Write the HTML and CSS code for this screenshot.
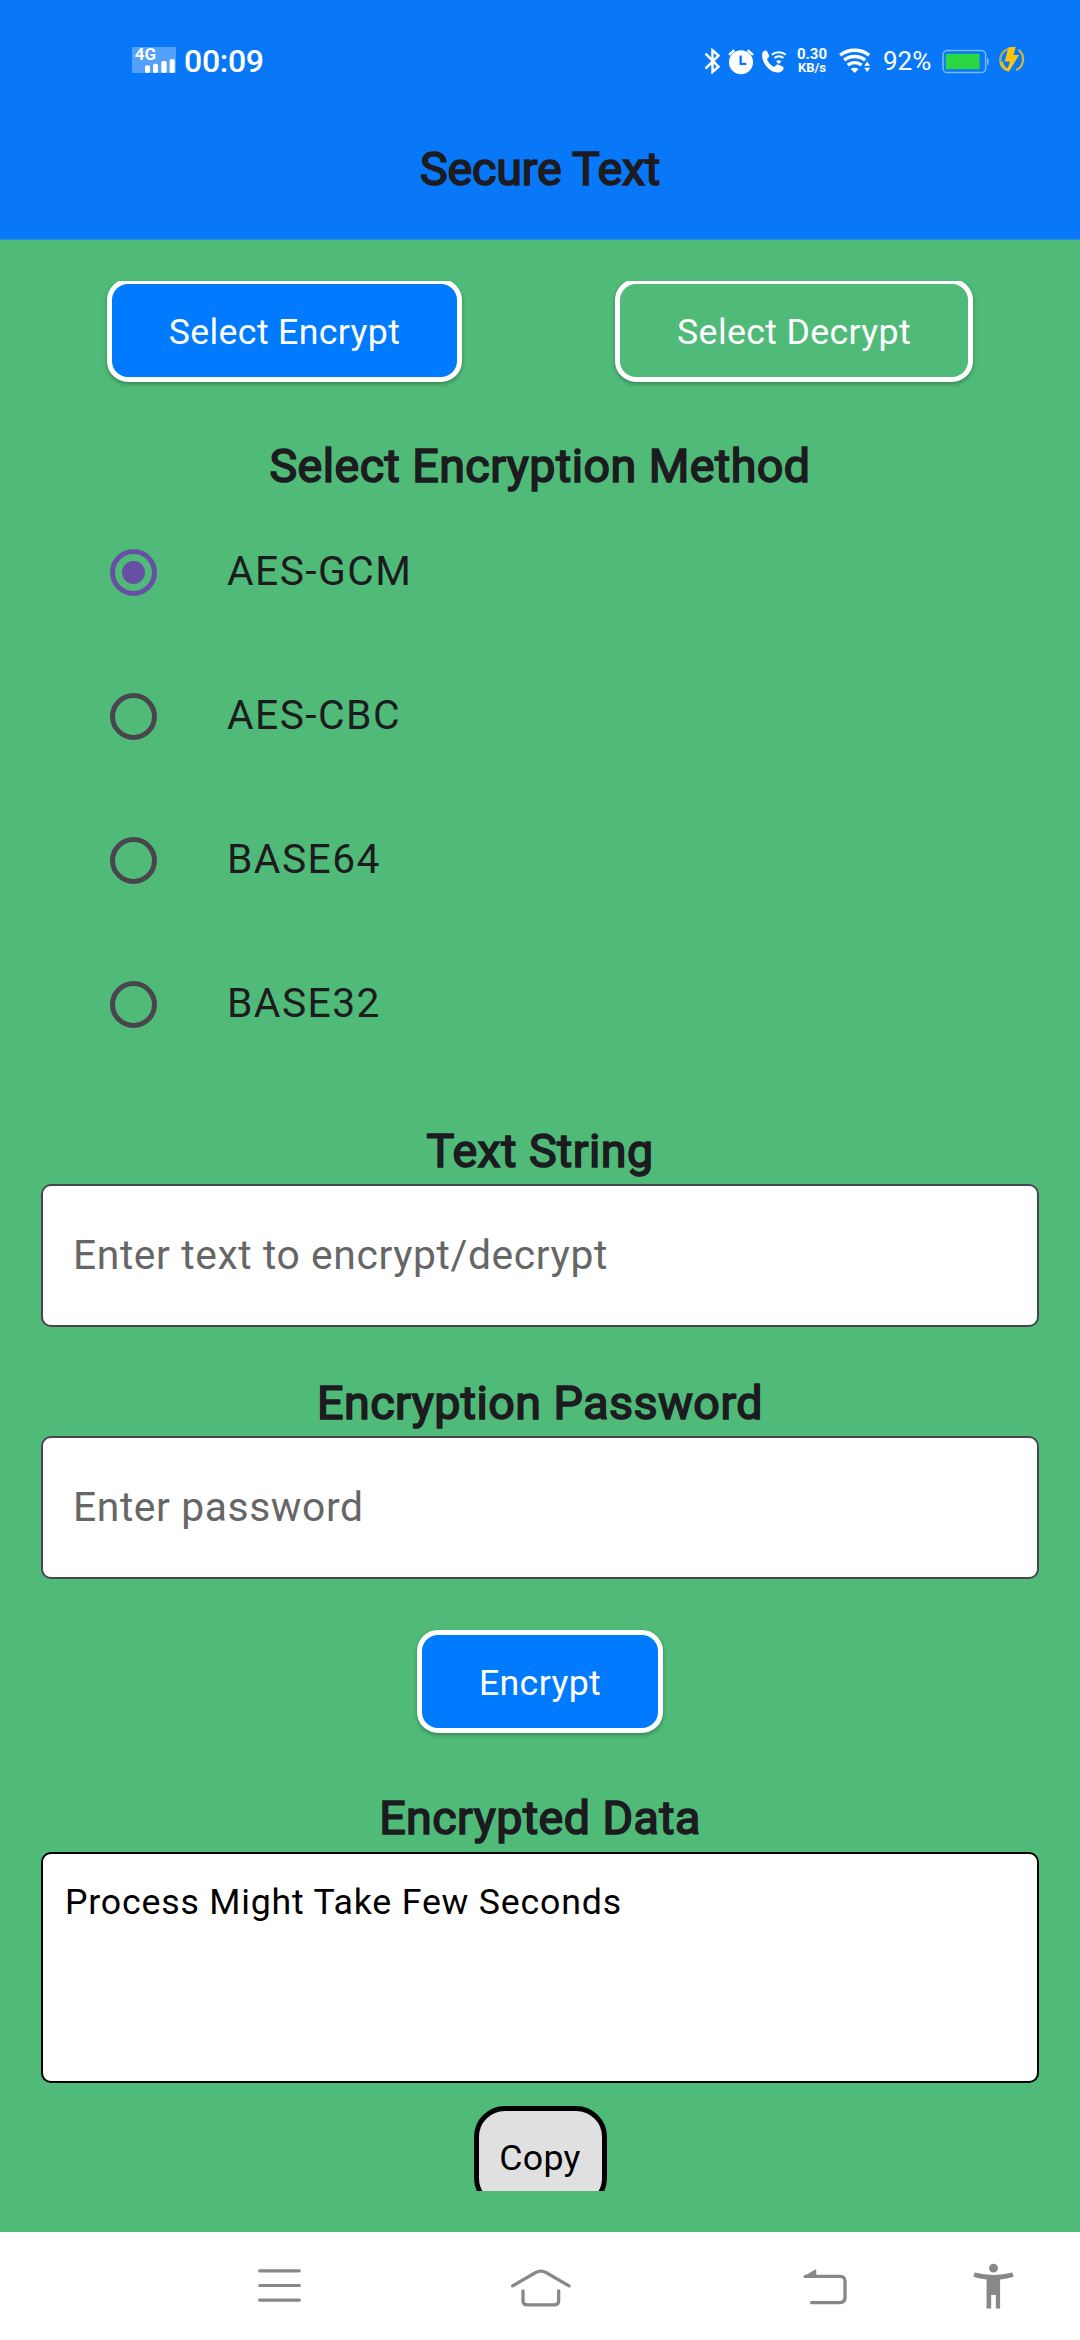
FILE: index.html
```html
<!DOCTYPE html>
<html lang="en">
<head>
<meta charset="utf-8">
<title>Secure Text</title>
<link rel="stylesheet" href="styles.css">
</head>
<body>
<div class="screen">
  <header class="top">
    <div class="status">
      <svg class="signal" viewBox="0 0 132 78">
        <rect width="132" height="78" fill="#fff" fill-opacity=".3"/>
        <rect x="39" y="55" width="15" height="23" rx="5" fill="#fff"/>
        <rect x="63" y="50" width="15" height="28" rx="5" fill="#fff"/>
        <rect x="88" y="42" width="16" height="36" rx="5" fill="#fff"/>
        <rect x="113" y="36" width="15" height="42" rx="5" fill="#fff"/>
        <text x="8" y="38" class="net" textLength="64" lengthAdjust="spacingAndGlyphs">4G</text>
      </svg>
      <span class="clock">00:09</span>
      <svg class="bt" viewBox="70 84 50 78" fill="none" stroke="#fff" stroke-width="7.5">
        <path d="M74 101L113 140L95 156V91L113 107L74 146"/>
      </svg>
      <svg class="alarm" viewBox="141 84 78 80">
        <circle cx="180" cy="126" r="36" fill="#fff"/>
        <path d="M144 104l16-14M216 104l-16-14" stroke="#fff" stroke-width="7" fill="none"/>
        <path d="M179 106v25h17" stroke="#0878f8" stroke-width="7" fill="none"/>
      </svg>
      <svg class="call" viewBox="243 86 76 72">
        <path fill="#fff" d="M247 93c4-4 10-4 12 0l6 14c1 4-5 7-7 10 4 10 11 18 22 23 4-2 6-8 11-7l15 6c4 3 3 8 0 11-6 7-16 9-27 5-18-7-33-27-35-44-1-8-1-13 3-18z"/>
        <path d="M273 103c11-10 31-10 42 0M281 113c8-7 19-7 27 0" fill="none" stroke="#fff" stroke-width="6.500"/>
        <path d="M286 123q8-6 16 0l-8 8z" fill="#fff"/>
      </svg>
      <div class="speed"><span>0.30</span><span>KB/s</span></div>
      <svg class="wifi" viewBox="476 84 96 76">
        <path d="M479 106c25-20 63-20 88 0M491 121c18-15 46-15 64 0M502 136c12-10 30-10 42 0" fill="none" stroke="#fff" stroke-width="10.500"/>
        <path d="M511 148q12-8 24 0l-12 12z" fill="#fff"/>
        <path d="M552 138l9-13 9 13zM552 144h18l-9 13z" fill="#fff"/>
      </svg>
      <span class="pct">92%</span>
      <svg class="battery" viewBox="785 87 140 74">
        <rect x="788" y="91" width="127" height="66" rx="13" fill="none" stroke="#7bb8fb" stroke-width="4.5"/>
        <path d="M919 114c5 0 5 3 5 10s0 11-5 11z" fill="#7bb8fb"/>
        <rect x="796" y="101" width="101" height="46" fill="#2bd743"/>
      </svg>
      <svg class="bolt" viewBox="952 78 82 82">
        <path d="M965 142c-13-22-4-48 19-55" fill="none" stroke="#a5ad70" stroke-width="7"/>
        <path d="M1015 90c20 18 17 50-8 61" fill="none" stroke="#d0b63c" stroke-width="7"/>
        <path d="M958 128c3 15 12 25 24 27l7-8c-12-1-19-8-22-22z" fill="#e5bd24"/>
        <path d="M984 82l22-2-7 25h17l-31 51-5-2 8-29h-16z" fill="#fcc40c"/>
      </svg>
    </div>
    <h1 class="title">Secure Text</h1>
  </header>

  <main class="content">
    <div class="modes">
      <button class="btn">Select Encrypt</button>
      <button class="btn btn-clear">Select Decrypt</button>
    </div>
    <h2 class="heading heading-method">Select Encryption Method</h2>
    <div class="methods">
      <div class="method"><span class="radio on"></span><span class="name">AES-GCM</span></div>
      <div class="method"><span class="radio"></span><span class="name">AES-CBC</span></div>
      <div class="method"><span class="radio"></span><span class="name">BASE64</span></div>
      <div class="method"><span class="radio"></span><span class="name">BASE32</span></div>
    </div>
    <h2 class="heading heading-text">Text String</h2>
    <div class="field">Enter text to encrypt/decrypt</div>
    <h2 class="heading heading-pass">Encryption Password</h2>
    <div class="field">Enter password</div>
    <button class="btn btn-run">Encrypt</button>
    <h2 class="heading heading-data">Encrypted Data</h2>
    <div class="output">Process Might Take Few Seconds</div>
    <button class="copy">Copy</button>
  </main>

  <nav class="nav">
    <svg class="menu" viewBox="0 0 127 97" stroke="#888" stroke-width="9.500" stroke-linecap="round">
      <path d="M5 5h117M5 48.500h117M5 92h117"/>
    </svg>
    <svg class="home" viewBox="873 140 180 113" fill="none" stroke="#888" stroke-width="10" stroke-linecap="round">
      <path d="M878 190L947 150Q963 142 978 150L1047 190M909 205V234Q909 247 922 247H1003Q1016 247 1016 234V205"/>
    </svg>
    <svg class="back" viewBox="128 140 133 108" fill="none" stroke="#888" stroke-width="10" stroke-linecap="round">
      <path d="M135 162H240Q255 162 255 177V226Q255 241 240 241H154"/>
      <path d="M130 162L165 141Q168 141 168 145V166H130z" fill="#888" stroke="none"/>
    </svg>
    <svg class="person" viewBox="640 129 124 138" fill="#888">
      <circle cx="702" cy="144" r="13.500"/>
      <path d="M645 157Q702 172 759 157L763 170Q742 176 722 178V266H709V225H695V266H681V178Q662 176 641 170z"/>
    </svg>
  </nav>
</div>
</body>
</html>
```
FILE: styles.css
```css
* { box-sizing: border-box; margin: 0; padding: 0; }
body { font-family: Roboto, "Liberation Sans", sans-serif; }
svg { display: block; flex: none; }
button { font-family: inherit; display: block; }

.screen {
  width: 1080px;
  height: 2340px;
  display: flex;
  flex-direction: column;
  background: #50bb78;
  overflow: hidden;
}

.top {
  height: 240px;
  flex: none;
  background: #0878f8;
  border-bottom: 1px solid #2a8fd0;
}
.status {
  display: flex;
  align-items: flex-start;
  height: 141px;
  padding: 47px 0 0 132px;
  color: #fff;
}
.signal { width: 44px; height: 26px; overflow: visible; }
.net { font-size: 50px; font-weight: 700; fill: #fff; }
.clock { width: 85px; margin: -6px 0 0 8px; font-size: 32px; line-height: 40px; font-weight: 500; letter-spacing: -.3px; }
.bt { width: 17px; height: 26px; margin: 1px 0 0 435px; }
.alarm { width: 26px; height: 27px; margin: 1px 0 0 7px; }
.call { width: 25px; height: 24px; margin: 2px 0 0 8px; }
.speed {
  width: 36px;
  margin: 0 0 0 7px;
  display: flex;
  flex-direction: column;
  font-size: 15px;
  line-height: 14px;
  font-weight: 700;
  text-align: center;
}
.speed span + span { font-size: 13px; }
.wifi { width: 32px; height: 25px; margin: 1px 0 0 9px; }
.pct { width: 50px; margin: -1px 0 0 12px; font-size: 26px; line-height: 30px; }
.battery { width: 47px; height: 25px; margin: 2px 0 0 9px; }
.bolt { width: 27px; height: 27px; margin: -1px 0 0 9px; }

.title, .heading {
  font-size: 46.500px;
  line-height: 56px;
  font-weight: 400;
  -webkit-text-stroke: 1.700px currentColor;
  color: #1c1b1f;
  text-align: center;
  white-space: nowrap;
}
.title { letter-spacing: -.1px; }
.heading { letter-spacing: .5px; }

.content {
  width: 998px;
  height: 1910px;
  margin: 41px 41px 0;
  flex: none;
  overflow: hidden;
}
.modes {
  display: flex;
  justify-content: space-between;
  padding: 0 66px;
  margin-top: -2px;
}
.btn {
  width: 355px;
  height: 103px;
  padding-top: 2px;
  border: 5px solid #fff;
  border-radius: 21px;
  background: #007aff;
  color: #fff;
  font-size: 35.700px;
  line-height: 42px;
  letter-spacing: .35px;
  box-shadow: 0 2px 4px rgba(0, 0, 0, .3);
}
.btn-clear { width: 358px; background: #50bb78; }
.heading-method { margin-top: 56px; }
.methods { margin-top: 6px; }
.method {
  display: flex;
  align-items: center;
  height: 144px;
  padding-left: 69px;
  gap: 70px;
  font-size: 40.800px;
  letter-spacing: 1.450px;
  color: #1c1b1f;
}
.name { padding-bottom: 3px; }
.radio {
  width: 47px;
  height: 47px;
  border: 5px solid #49454f;
  border-radius: 50%;
}
.radio.on {
  border-color: #6750a4;
  background: radial-gradient(circle, #6750a4 11px, transparent 12px);
}
.heading-text { margin-top: 47px; }
.field {
  display: flex;
  align-items: center;
  height: 143px;
  margin-top: 5px;
  padding: 0 0 2px 30px;
  border: 2.500px solid #49454f;
  border-radius: 10px;
  background: #fff;
  color: #666;
  font-size: 40.800px;
  letter-spacing: .6px;
}
.heading-pass { margin-top: 48px; }
.btn-run { width: 246px; margin: 51px auto 0; }
.heading-data { margin-top: 57px; }
.output {
  height: 231px;
  margin-top: 6px;
  padding: 27px 22px;
  border: 2.500px solid #000;
  border-radius: 10px;
  background: #fff;
  color: #000;
  font-size: 35.700px;
  line-height: 42px;
  letter-spacing: .8px;
}
.copy {
  width: 133px;
  height: 103px;
  margin: 23px auto 0;
  border: 5px solid #000;
  border-radius: 31px;
  background: #e0e0e0;
  color: #000;
  font-size: 35.700px;
  letter-spacing: .3px;
}

.nav {
  display: flex;
  align-items: flex-start;
  height: 108px;
  margin-top: 41px;
  padding: 37px 0 0 258px;
  flex: none;
  background: #fff;
}
.menu { width: 43px; height: 33px; }
.home { width: 60px; height: 38px; margin-left: 210px; }
.back { width: 44px; height: 36px; margin-left: 232px; }
.person { width: 41px; height: 46px; margin: -6px 0 0 126px; }
```
